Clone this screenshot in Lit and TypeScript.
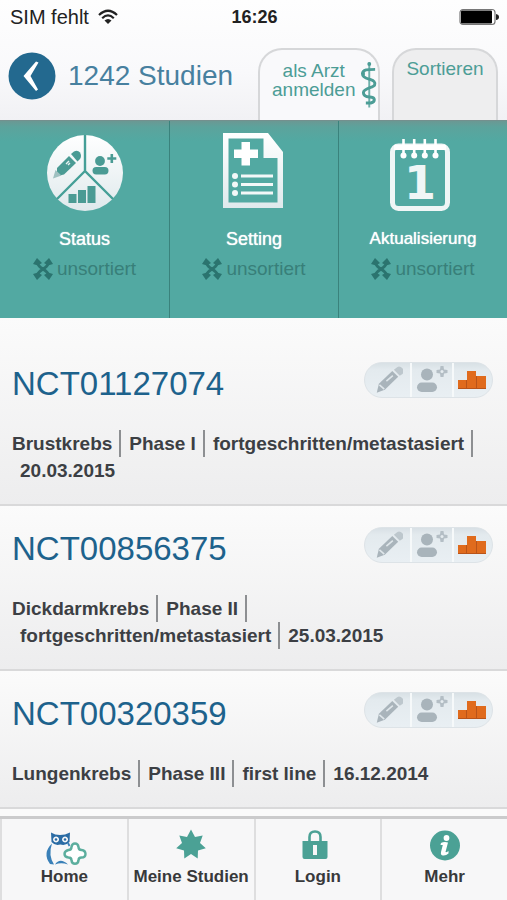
import { LitElement, html, css, svg } from "lit";
import { customElement, property } from "lit/decorators.js";

interface Study {
  id: string;
  facts: string[];
}

const studies: Study[] = [
  { id: "NCT01127074", facts: ["Brustkrebs", "Phase I", "fortgeschritten/metastasiert", "20.03.2015"] },
  { id: "NCT00856375", facts: ["Dickdarmkrebs", "Phase II", "fortgeschritten/metastasiert", "25.03.2015"] },
  { id: "NCT00320359", facts: ["Lungenkrebs", "Phase III", "first line", "16.12.2014"] },
];

const iconDefs = svg`
  <defs>
    <linearGradient id="white" x1="0" y1="0" x2="0" y2="1">
      <stop offset="0" stop-color="#ffffff" /><stop offset="1" stop-color="#dfe9ec" />
    </linearGradient>
  </defs>`;

const pieIcon = html`
  <svg width="76" height="78" viewBox="0 0 76 78" aria-hidden="true">
    ${iconDefs}
    <circle cx="38" cy="40" r="38" fill="url(#white)" />
    <path d="M38 2V38L66 66M38 38L10 66" fill="none" stroke="#459f97" stroke-width="2.400" />
    <g fill="#4a9b94">
      <path d="M10 35L22 23L29 30L17 41.500L10 43z" />
      <path d="M24 21L27 18.500Q30.500 16.500 33 19.500Q35 23 33 26L30.500 28.500z" />
      <path d="M6 45.500L8.500 37L14.500 42.500z" fill="#9fc1c1" />
      <path d="M19 31l3-3M23 30l-2 2" stroke="#e8f2f2" stroke-width="1.400" />
      <circle cx="53" cy="28" r="4.900" />
      <rect x="45.500" y="34" width="16" height="7.500" rx="3.700" />
      <path d="M63.500 21h2.600v3.200h3.200v2.600h-3.200v3.200h-2.600v-3.200h-3.200v-2.600h3.200z" />
      <path d="M21.500 61h8v9h-8zM31 57h8v13h-8zM40.500 53h8v17h-8z" />
    </g>
  </svg>`;

const documentIcon = html`
  <svg width="76" height="78" viewBox="1 0 76 78" aria-hidden="true">
    ${iconDefs}
    <path fill="url(#white)" fill-rule="evenodd"
      d="M8 0H53L68 19V75H8zM13.500 5.500V69.500H62.500V25H48.500V5.500z" />
    <path fill="#fff" d="M26.500 9h8.500v7.500h8v8.500h-8v7.500h-8.500v-7.500h-7.500v-8.500h7.500z" />
    <g fill="#f3f8f8">
      <circle cx="20" cy="43" r="3" /><circle cx="20" cy="51.500" r="3" /><circle cx="20" cy="60" r="3" />
      <path d="M26 41.500h32v3H26zM26 50h32v3H26zM26 58.500h32v3H26z" />
    </g>
  </svg>`;

const calendarIcon = html`
  <svg width="76" height="78" viewBox="3 0 76 78" aria-hidden="true">
    <rect x="10.500" y="13" width="55" height="62.500" rx="6" fill="none" stroke="#f0f6f6" stroke-width="5" />
    <path d="M12 12h52v5H12z" fill="#fff" />
    <g fill="#fff">
      <path d="M20.200 6h2.600v17h-2.600zM30.900 6h2.600v17h-2.600zM41.500 6h2.600v17h-2.600zM52.200 6h2.600v17h-2.600z" />
      <circle cx="21.500" cy="22.500" r="3" /><circle cx="32.200" cy="22.500" r="3" />
      <circle cx="42.800" cy="22.500" r="3" /><circle cx="53.500" cy="22.500" r="3" />
    </g>
    <text x="38" y="66" text-anchor="middle" font-family="'DejaVu Sans', sans-serif" font-weight="700"
      font-size="46" fill="#f0f6f6">1</text>
  </svg>`;

const shuffleIcon = html`
  <svg width="20" height="24" viewBox="0 0 20 24" aria-hidden="true">
    <path d="M4 5Q5 9 10 12T16 19M16 5Q15 9 10 12T4 19" fill="none" stroke="#2b746f" stroke-width="3" />
    <path fill="#2b746f" d="M4 1L0 7L5 8.500L9 6zM16 1L20 7L15 8.500L11 6zM4 23L0 17L5 15.500L9 18zM16 23L20 17L15 15.500L11 18z" />
  </svg>`;

const filters = [
  { label: "Status", icon: pieIcon },
  { label: "Setting", icon: documentIcon },
  { label: "Aktualisierung", icon: calendarIcon, long: true },
];

const owlIcon = html`
  <svg width="46" height="36" viewBox="-6 0 46 36" aria-hidden="true">
    <path fill="#2b6ca5" fill-rule="evenodd" d="M4 3.500Q8 6 13 6T23 3.500L22.500 13Q19 17 13.300 15.500Q8 17 4.500 13zM9 7.500a3 3 0 1 0 .1 0M18 7.500a3 3 0 1 0 .1 0" />
    <circle cx="9" cy="10.500" r="1.300" fill="#2b6ca5" /><circle cx="18" cy="10.500" r="1.300" fill="#2b6ca5" />
    <path fill="#3a80b8" d="M5 14.500Q-5 24 3 35L7 35.500Q1 26 5 14.500z" />
    <path fill="#3a80b8" d="M8 35.500Q13 28 21 35.500Q14 33 8 35.500z" />
    <path fill="none" stroke="#3a80b8" stroke-width="1.800" d="M21 14l1.500 3" />
    <path fill="#fff" stroke="#5cae9e" stroke-width="2.400" stroke-linejoin="round"
      d="M24.500 18Q25 14.500 28 14.500T31.500 18Q31.500 21 34.500 21Q38.500 21.500 38.500 25T34.500 28.500Q31.500 28.500 31.500 31.500Q31 34.800 28 34.800T24.500 31.500Q24.500 28.500 21.500 28.500Q17.500 28 17.500 25T21.500 21Q24.500 21 24.500 18z" />
  </svg>`;

const starIcon = html`
  <svg width="40" height="36" viewBox="0 0 40 36" aria-hidden="true">
    <path fill="#4ba195" d="M20 .5L24 8L31.700 6.600L29 14L34.800 19.300L27 21.600L26.700 29.500L20 25L13.300 29.500L13 21.600L5.200 19.300L11 14L8.300 6.600L16 8z" />
  </svg>`;

const lockIcon = html`
  <svg width="40" height="36" viewBox="0 0 40 36" aria-hidden="true">
    <path d="M11.500 13V8Q11.500 2.500 17 2.500T22.500 8V13" fill="none" stroke="#4ba195" stroke-width="2.600" />
    <path fill="#4ba195" fill-rule="evenodd" d="M4.500 12H29.500V28Q29.500 30 27.500 30H6.500Q4.500 30 4.500 28zM15 16V26H19V16z" />
  </svg>`;

const infoIcon = html`
  <svg width="40" height="36" viewBox="0 0 40 36" aria-hidden="true">
    <circle cx="20" cy="16.500" r="15" fill="#4ba195" />
    <g fill="#fff">
      <circle cx="21.500" cy="9" r="2.900" />
      <path d="M16 14Q19 12.500 23 13.500L20.500 23Q22 23.500 23.500 22L23.500 24.500Q20 27.500 16.500 26Q15.500 25 16 23L17.800 16H15.500z" />
    </g>
  </svg>`;

const tabs = [
  { label: "Home", icon: owlIcon },
  { label: "Meine Studien", icon: starIcon },
  { label: "Login", icon: lockIcon },
  { label: "Mehr", icon: infoIcon },
];

@customElement("study-card")
class StudyCard extends LitElement {
  @property({ attribute: false }) study!: Study;

  static styles = css`
    :host {
      display: block;
    }
    .top {
      display: flex;
      justify-content: space-between;
      align-items: flex-start;
      margin-bottom: 26px;
    }
    .title {
      margin: 0;
      font-size: 33px;
      line-height: 40px;
      font-weight: 400;
    }
    .link {
      color: #1d628c;
      text-decoration: none;
    }
    .pill {
      display: grid;
      grid-template-columns: 45px 42px 40px;
      box-sizing: border-box;
      height: 36px;
      margin: -2px 2px 0 0;
      border: 1px solid #dde3e7;
      border-radius: 18px;
      background: linear-gradient(#d8e0e5, #e3eaee 20%, #e9eff3);
      overflow: hidden;
    }
    .segment {
      display: grid;
      place-items: center;
    }
    .segment + .segment {
      border-left: 2px solid #f6f9fa;
    }
    .facts {
      display: flex;
      flex-wrap: wrap;
      margin: 0;
      padding: 0;
      list-style: none;
      color: #3c3f44;
      font-size: 19px;
      line-height: 27px;
      font-weight: 700;
    }
    .fact {
      padding: 0 7px 0 8px;
      border-right: 2px solid #8d8f92;
      white-space: nowrap;
    }
    .fact:first-child {
      padding-left: 0;
    }
    .fact:last-child {
      border-right: 0;
      padding-right: 0;
    }
  `;

  render() {
    return html`
      <div class="top">
        <h2 class="title"><a class="link" href="#${this.study.id}">${this.study.id}</a></h2>
        <div class="pill">
          <span class="segment">
            <svg width="30" height="30" viewBox="-2 0 28 28" aria-hidden="true">
              <path fill="#a9b4bb" d="M3.500 17.500L16 5.500L21.500 11L9 23L1.500 26z" />
              <path fill="#bdc7cd" d="M17.500 4.500L20.500 2Q23 .5 25.500 3Q27.500 6 25.500 8.500L23 10z" />
              <path stroke="#dfe6ea" stroke-width="1.500" d="M4 18.500L8.500 22.500M10.500 15l6-5" />
            </svg>
          </span>
          <span class="segment">
            <svg width="34" height="28" viewBox="0 0 34 28" aria-hidden="true">
              <circle cx="12" cy="8.500" r="6" fill="#a9b4bb" />
              <rect x="2" y="16.500" width="20" height="9.500" rx="4.700" fill="#a9b4bb" />
              <path fill="#b4bec5" d="M25.500 0h3l.5 3.500 3.500.5v3l-3.500.5-.5 3.500h-3l-.5-3.500-3.500-.5v-3l3.500-.5z" />
              <circle cx="27" cy="5.500" r="1.500" fill="#e5ebef" />
            </svg>
          </span>
          <span class="segment">
            <svg width="30" height="22" viewBox="1 0 30 22" aria-hidden="true">
              <path fill="#e06b1d" d="M0 11h9v9H0zM10 2h9v18h-9zM20 7h9v13h-9z" />
              <path stroke="#b9541a" d="M0 19.500h29M9.500 11v9M19.500 7v13" />
            </svg>
          </span>
        </div>
      </div>
      <ul class="facts">
        ${this.study.facts.map((fact) => html`<li class="fact">${fact}</li>`)}
      </ul>
    `;
  }
}

@customElement("app-root")
class AppRoot extends LitElement {
  static styles = css`
    :host {
      display: flex;
      flex-direction: column;
      min-height: 100vh;
      background: #fafafa;
      font-family: "Liberation Sans", Arial, sans-serif;
    }
    button {
      font: inherit;
      cursor: pointer;
    }
    .head {
      background: linear-gradient(#fefefe, #f9f9fb 60%, #f1f1f4);
    }
    .system {
      display: grid;
      grid-template-columns: 1fr auto 1fr;
      align-items: center;
      height: 34px;
      padding: 0 8px 0 10px;
      color: #222;
    }
    .carrier {
      display: flex;
      align-items: center;
      gap: 9px;
      font-size: 20px;
    }
    .clock {
      font-size: 18px;
      font-weight: 700;
    }
    .battery {
      justify-self: end;
    }
    .bar {
      display: flex;
      align-items: flex-start;
      padding: 14px 9px 0 8px;
    }
    .back {
      display: block;
      width: 48px;
      height: 48px;
      margin-top: 4px;
      padding: 0;
      border: 0;
      background: none;
    }
    .count {
      flex: 1;
      margin: 0 0 0 12px;
      color: #47809f;
      font-size: 28px;
      line-height: 56px;
      font-weight: 400;
      white-space: nowrap;
    }
    .tab {
      display: flex;
      box-sizing: border-box;
      height: 72px;
      justify-content: center;
      align-items: flex-start;
      border: 2px solid #d6d7d9;
      border-bottom: 0;
      border-radius: 24px 24px 0 0;
      color: #4c9d96;
      font-size: 19px;
      line-height: 19px;
    }
    .doctor {
      width: 122px;
      margin-right: 12px;
      gap: 5px;
      padding: 11px 0 0 12px;
      justify-content: flex-start;
      background: #f9f9fb;
      overflow: hidden;
    }
    .sort {
      width: 106px;
      padding: 9px 0 0;
      background: #eeeeef;
    }
    .filters {
      display: grid;
      grid-template-columns: repeat(3, 1fr);
      background: linear-gradient(#6b9893, #5ca39c 6px, #52a9a2 20px);
      border-top: 1px solid #74908e;
    }
    .filter {
      display: flex;
      flex-direction: column;
      align-items: center;
      padding: 12px 0 34px;
      border: 0;
      background: none;
    }
    .filter + .filter {
      border-left: 1px solid #3a827c;
    }
    .name {
      margin-top: 13px;
      color: #fff;
      font-size: 18px;
      line-height: 30px;
      text-shadow: 0 0 1px #fff;
    }
    .long {
      font-size: 17px;
    }
    .order {
      display: flex;
      align-items: center;
      gap: 4px;
      color: #387f79;
      font-size: 19px;
      line-height: 30px;
    }
    .list {
      flex: 1;
    }
    .card {
      padding: 23px 12px 20px;
      border-bottom: 2px solid #d9d9da;
      background: linear-gradient(#fbfbfb, #ededee);
    }
    .card:first-child {
      padding-top: 46px;
    }
    .tabs {
      display: grid;
      grid-template-columns: repeat(4, 1fr);
      position: sticky;
      bottom: 0;
      border-top: 3px solid #cbcbcc;
      background: #f7f7f8;
    }
    .item {
      display: flex;
      flex-direction: column;
      align-items: center;
      padding: 10px 0 11px;
      border-left: 2px solid #dededf;
      color: #38393b;
      font-size: 17px;
      line-height: 24px;
      font-weight: 700;
      text-decoration: none;
      white-space: nowrap;
    }
  `;

  render() {
    return html`
      <header class="head">
        <div class="system">
          <span class="carrier">
            SIM fehlt
            <svg width="20" height="16" viewBox="0 0 20 16" aria-hidden="true">
              <path d="M1 6Q10 -2.500 19 6M4.200 9.200Q10 3.500 15.800 9.200" fill="none" stroke="#222" stroke-width="2.200" />
              <path d="M6.500 11.500Q10 8.500 13.500 11.500L10 15z" fill="#222" />
            </svg>
          </span>
          <span class="clock">16:26</span>
          <svg class="battery" width="40" height="18" viewBox="0 0 40 18" aria-hidden="true">
            <rect x="1" y="1.500" width="35" height="15" rx="3" fill="#fff" stroke="#777" stroke-width="1.200" />
            <rect x="2" y="2.500" width="31" height="13" rx="1" fill="#000" />
            <path d="M37 6q3 .5 3 3t-3 3z" fill="#222" />
          </svg>
        </div>
        <div class="bar">
          <button class="back" aria-label="Zurück">
            <svg width="48" height="48" viewBox="0 0 48 48" aria-hidden="true">
              <circle cx="24" cy="24" r="23.500" fill="#23698f" />
              <path fill="#fff" d="M28 9.500L30.500 10.500L22.500 24L30 37.500L28 39L15.500 24z" />
            </svg>
          </button>
          <h1 class="count">1242 Studien</h1>
          <button class="tab doctor">
            <span>als Arzt<br />anmelden</span>
            <svg width="18" height="48" viewBox="0 0 18 48" aria-hidden="true">
              <path d="M9.500 1V47" stroke="#6fb0aa" stroke-width="2" />
              <circle cx="9.500" cy="2.500" r="2" fill="#4c9d96" />
              <path d="M15.500 8C8 8 2.500 8 2.500 12.500S8 17.500 11 18.500S16 21 15 24S3.500 27 3.500 32S9 36 12 36.500S16.500 41 11 42.500L6 42.500M2 12.500h3" fill="none" stroke="#4c9d96" stroke-width="3" />
            </svg>
          </button>
          <button class="tab sort">Sortieren</button>
        </div>
      </header>
      <section class="filters">
        ${filters.map(
          (f) => html`
            <button class="filter">
              ${f.icon}
              <span class="name ${f.long ? "long" : ""}">${f.label}</span>
              <span class="order">${shuffleIcon}unsortiert</span>
            </button>
          `
        )}
      </section>
      <main class="list">
        ${studies.map((s) => html`<study-card class="card" .study=${s}></study-card>`)}
      </main>
      <nav class="tabs">
        ${tabs.map((t) => html`<a class="item" href="#">${t.icon}<span>${t.label}</span></a>`)}
      </nav>
    `;
  }
}
